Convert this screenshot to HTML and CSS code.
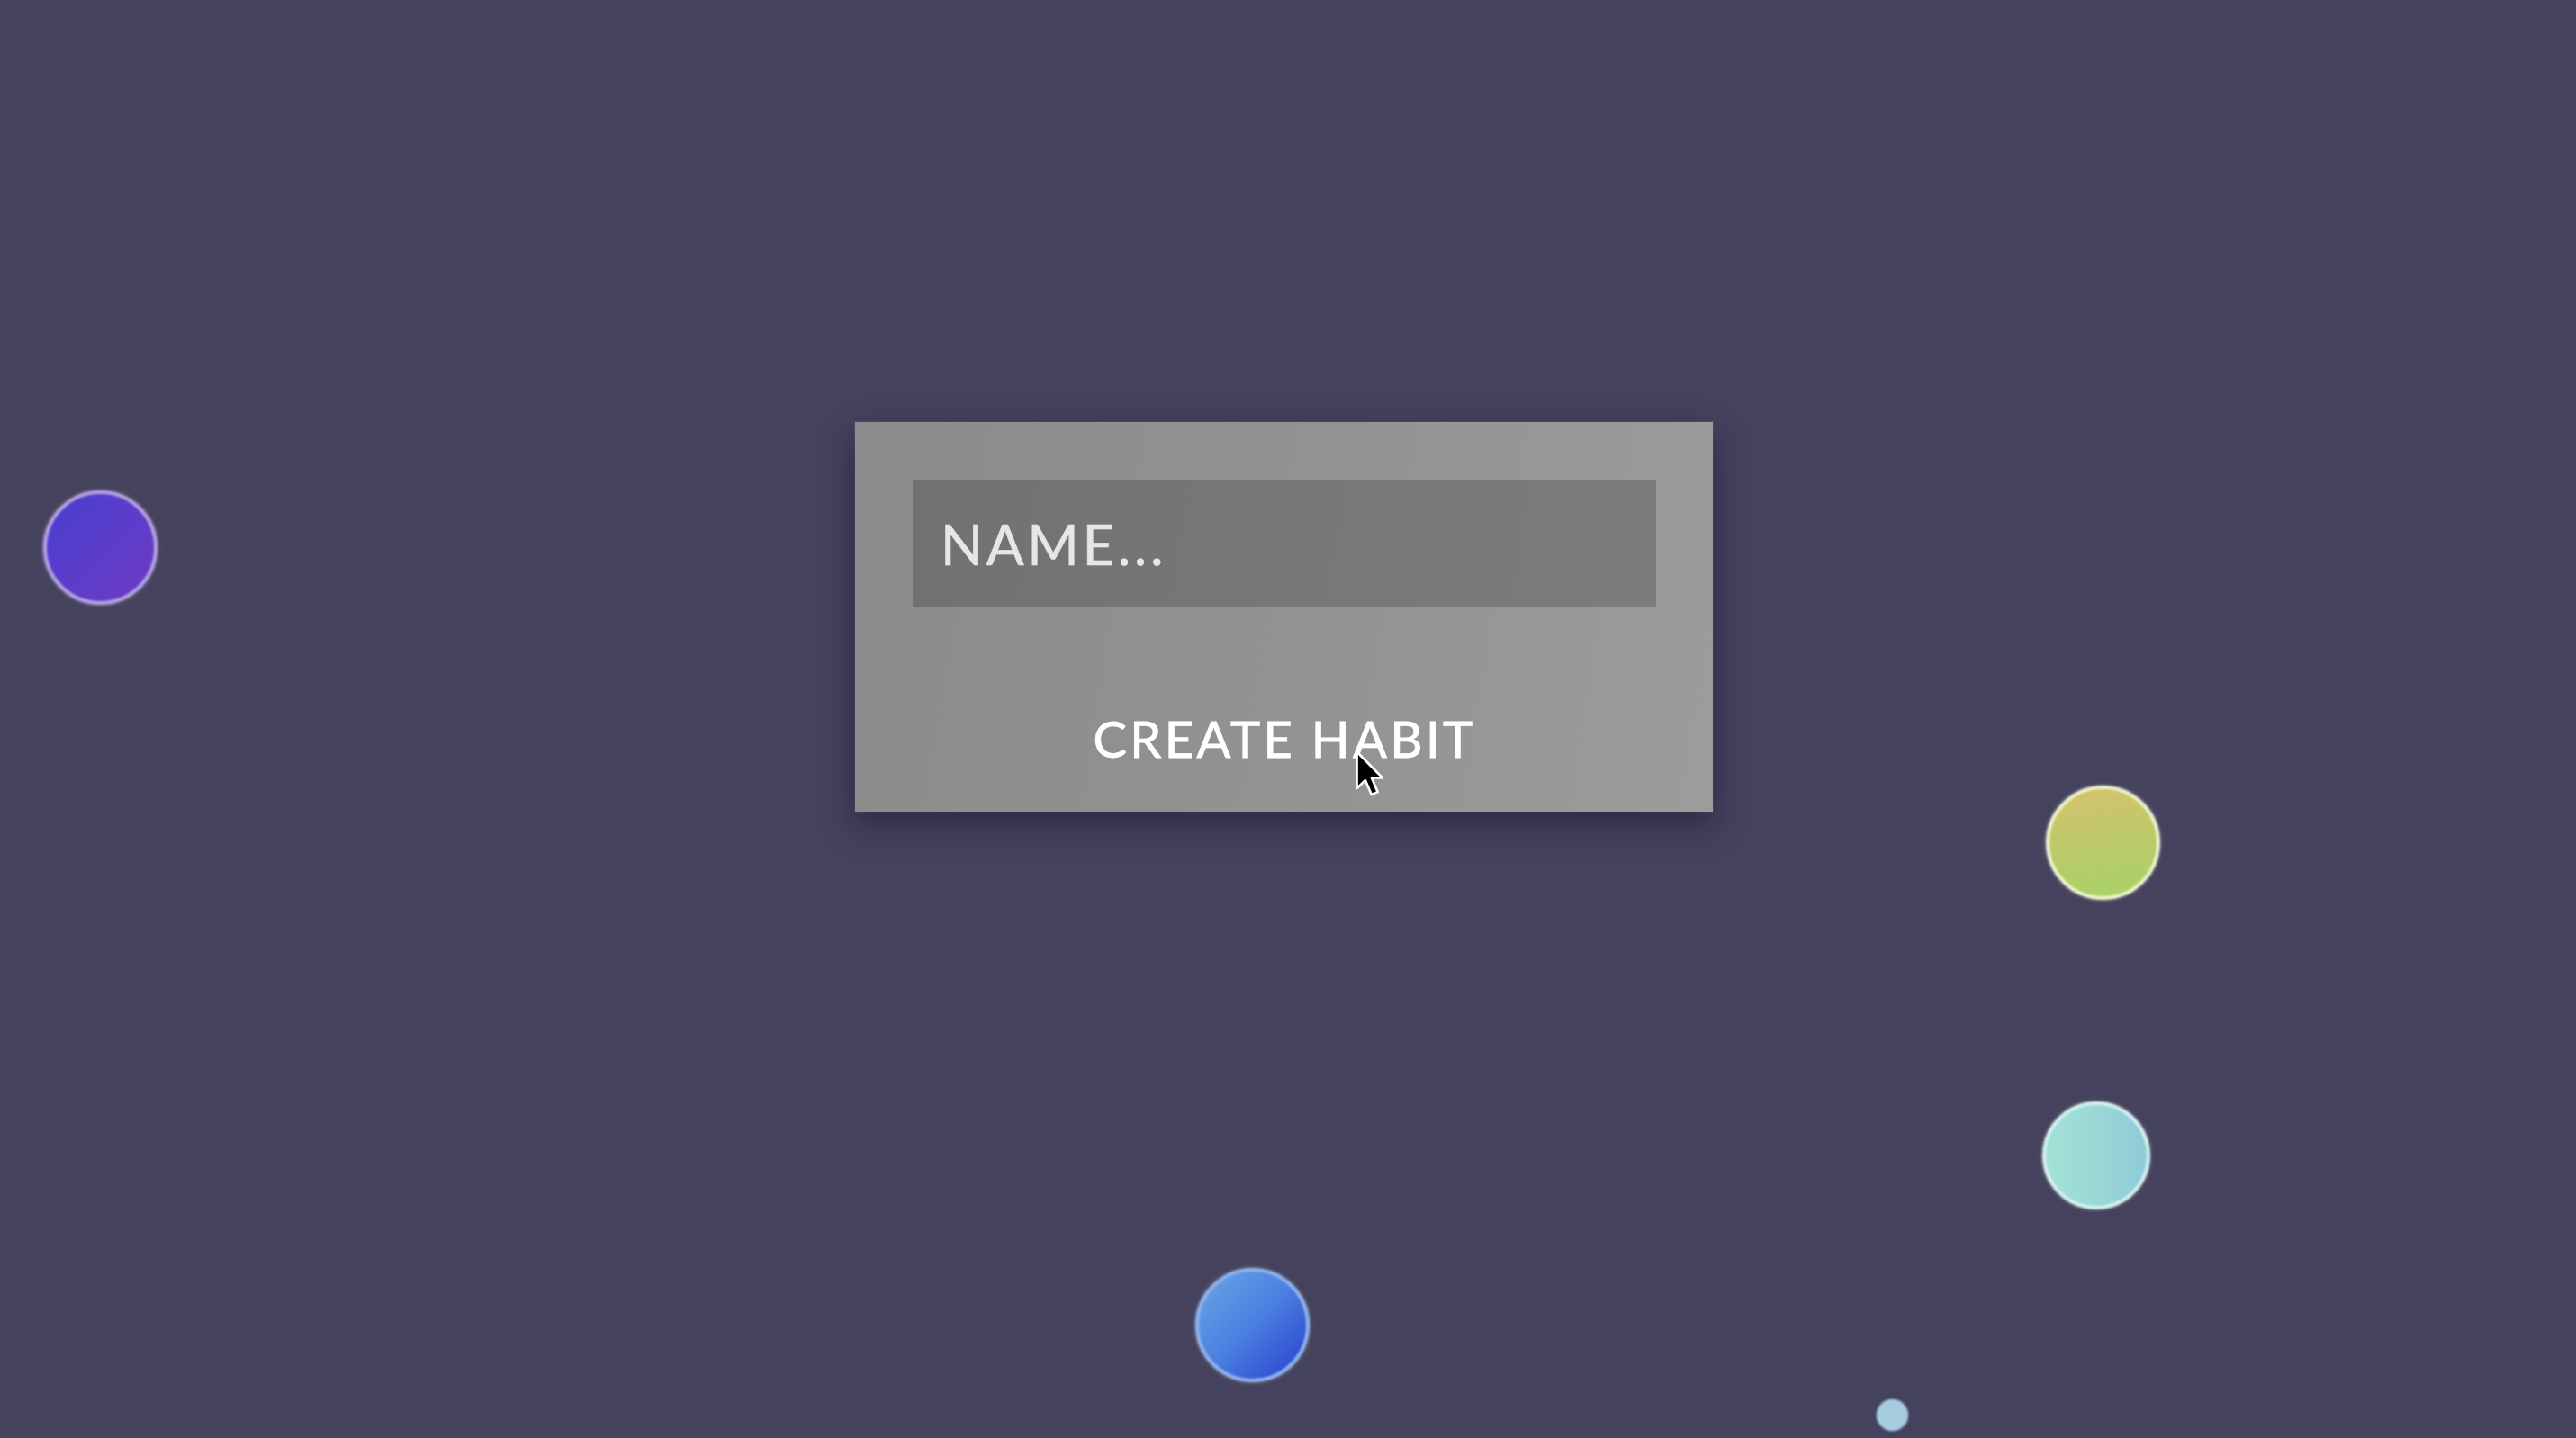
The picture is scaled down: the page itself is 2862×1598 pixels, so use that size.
FILE: index.html
```html
<!DOCTYPE html>
<html lang="en">
<head>
<meta charset="utf-8">
<title>Create Habit</title>
<link rel="stylesheet" href="styles.css">
</head>
<body>
<div class="page">
  <div class="bubble bubble-purple"></div>
  <div class="bubble bubble-yellow"></div>
  <div class="bubble bubble-teal"></div>
  <div class="bubble bubble-blue"></div>
  <div class="bubble bubble-dot"></div>

  <form class="card">
    <input class="name-input" type="text" placeholder="NAME...">
    <button class="create-btn" type="button">CREATE HABIT</button>
    <svg class="cursor" viewBox="0 0 13 22" width="32" height="54" aria-hidden="true">
      <path d="M1 1 L1 17.5 L4.8 13.9 L7.6 20.4 L10.4 19.2 L7.7 12.8 L12.6 12.8 Z" fill="#000" stroke="#fff" stroke-width="1.1" stroke-linejoin="round"/>
    </svg>
  </form>
</div>
</body>
</html>
```

FILE: styles.css
```css
html, body {
  margin: 0;
  padding: 0;
}

body {
  background: #45425e;
  font-family: Lato, "Open Sans", "Liberation Sans", sans-serif;
  overflow: hidden;
}

.page {
  position: relative;
  width: 2862px;
  height: 1598px;
  box-sizing: border-box;
  padding: 469px 0 0 950px;
}

.card {
  position: relative;
  width: 953px;
  height: 433px;
  box-sizing: border-box;
  padding: 64px 63px 0 64px;
  display: flex;
  flex-direction: column;
  align-items: stretch;
  margin: 0;
  background: linear-gradient(100deg, #8b8b8b 0%, #929292 50%, #9c9c9c 100%);
  box-shadow: 0 14px 34px rgba(10, 8, 30, 0.45), 0 0 0 1px rgba(255, 255, 255, 0.06);
}

.name-input {
  display: block;
  height: 142px;
  box-sizing: border-box;
  margin: 0;
  padding: 0 0 0 31px;
  border: none;
  outline: none;
  background: linear-gradient(100deg, #717171 0%, #777777 50%, #7c7c7c 100%);
  font-family: Lato, "Open Sans", "Liberation Sans", sans-serif;
  font-size: 62px;
  letter-spacing: 3.5px;
  color: #eeeeee;
  -webkit-text-stroke: 0.6px #e6e6e6;
}

.name-input::placeholder {
  color: #e6e6e6;
  opacity: 1;
}

.create-btn {
  align-self: center;
  margin: 118px 0 0 0;
  padding: 0;
  border: none;
  background: none;
  font-family: Lato, "Open Sans", "Liberation Sans", sans-serif;
  font-size: 56px;
  line-height: 1;
  letter-spacing: 3.4px;
  color: #ffffff;
  -webkit-text-stroke: 0.8px #ffffff;
  cursor: pointer;
}

.cursor {
  position: absolute;
  left: 555px;
  top: 364px;
}

.bubble {
  position: absolute;
  box-sizing: border-box;
  border-radius: 50%;
  border: 4px solid rgba(255, 255, 255, 0.45);
  box-shadow: 0 0 4px rgba(255, 255, 255, 0.35);
  filter: blur(1.2px);
}

.bubble-purple {
  left: 48px;
  top: 545px;
  width: 127px;
  height: 127px;
  background: linear-gradient(135deg, #4a3fd0 0%, #5a3dca 50%, #6e3cc2 100%);
  border-color: #b5a0e6;
}

.bubble-yellow {
  left: 2273px;
  top: 873px;
  width: 127px;
  height: 127px;
  background: linear-gradient(170deg, #d6c26c 0%, #bcca6a 50%, #a6d468 100%);
  border-color: #eef4cc;
}

.bubble-teal {
  left: 2269px;
  top: 1224px;
  width: 120px;
  height: 120px;
  background: linear-gradient(90deg, #a2e2d6 0%, #9ad8d6 50%, #8ecad8 100%);
  border-color: #d6f2ee;
}

.bubble-blue {
  left: 1328px;
  top: 1409px;
  width: 127px;
  height: 127px;
  background: linear-gradient(135deg, #6aa8e6 0%, #4a7ee0 50%, #2a3fd0 100%);
  border-color: #8fb4ee;
}

.bubble-dot {
  left: 2085px;
  top: 1555px;
  width: 35px;
  height: 35px;
  border: none;
  box-shadow: 0 0 2px rgba(166, 204, 224, 0.6);
  background: #a6cce0;
}
```
